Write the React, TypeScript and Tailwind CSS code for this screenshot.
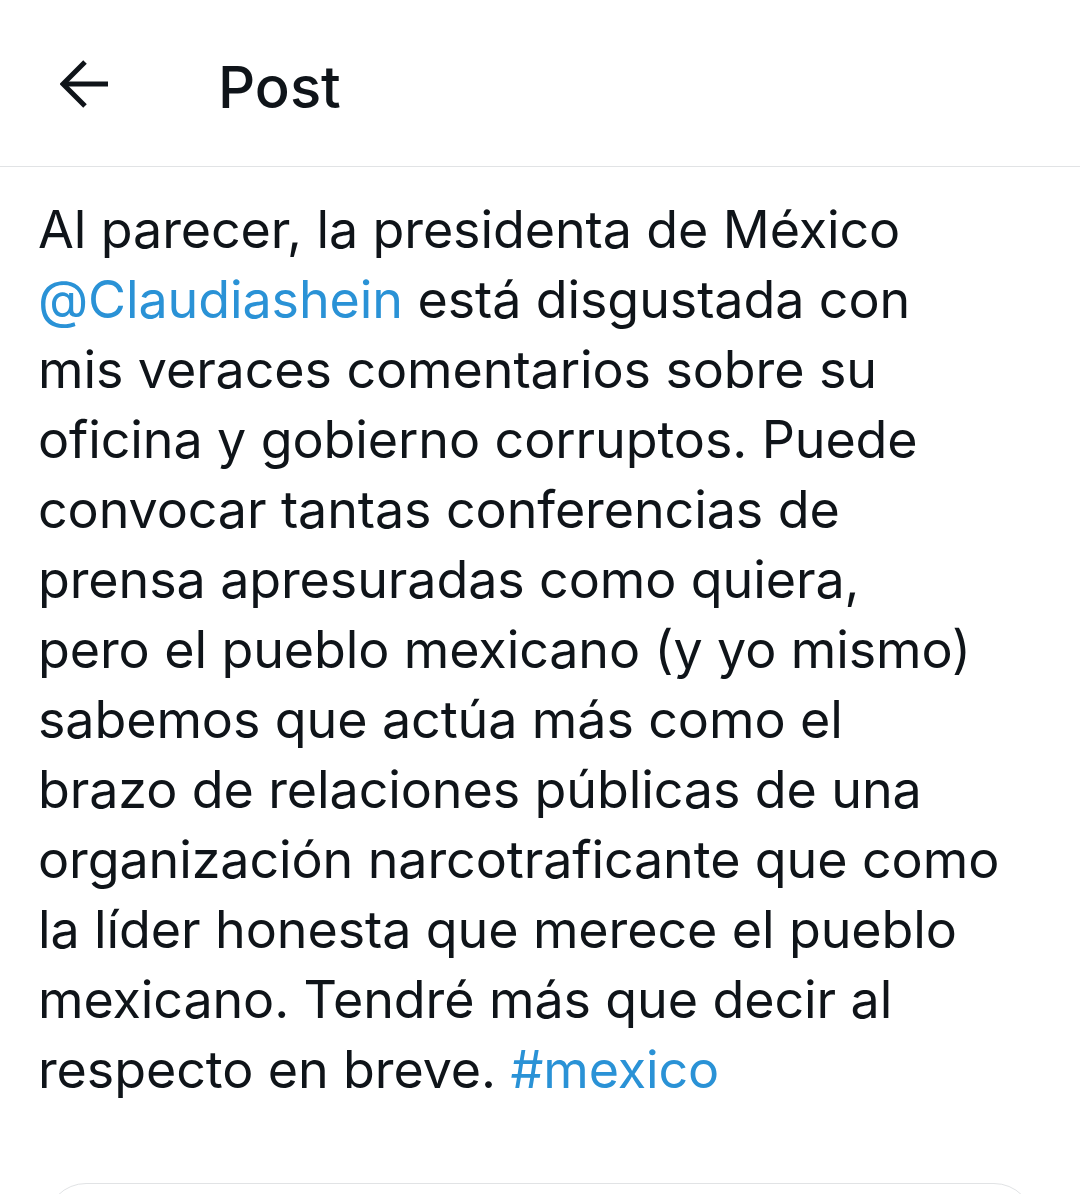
const lines: { text: string; link?: 'start' | 'end' }[] = [
  { text: 'Al parecer, la presidenta de México' },
  { text: 'está disgustada con', link: 'start' },
  { text: 'mis veraces comentarios sobre su' },
  { text: 'oficina y gobierno corruptos. Puede' },
  { text: 'convocar tantas conferencias de' },
  { text: 'prensa apresuradas como quiera,' },
  { text: 'pero el pueblo mexicano (y yo mismo)' },
  { text: 'sabemos que actúa más como el' },
  { text: 'brazo de relaciones públicas de una' },
  { text: 'organización narcotraficante que como' },
  { text: 'la líder honesta que merece el pueblo' },
  { text: 'mexicano. Tendré más que decir al' },
  { text: 'respecto en breve.', link: 'end' },
];

export default function App() {
  return (
    <div className="h-[1194px] w-[1080px] overflow-hidden bg-white font-['Inter',sans-serif] text-[#0f1419]">
      <header className="flex h-[167px] items-center border-b border-[#e1e3e5]">
        <div className="flex w-[218px] items-center pl-[60px] pt-[1px]">
          <svg width="50" height="50" viewBox="0 0 50 50" fill="none" stroke="currentColor" strokeWidth="5">
            <path d="M25 3 L3 25 L25 47" strokeLinejoin="miter" />
            <path d="M3 25 H48" />
          </svg>
        </div>
        <h1 className="pt-[8px] text-[58px] font-medium leading-none">Post</h1>
      </header>

      <div className="px-[38px] pt-[28px] text-[52px] leading-[70px] tracking-[-0.1px]">
        {lines.map((line, i) => (
          <div key={i} className="whitespace-nowrap">
            {line.link === 'start' && <span className="text-[#2a92d6]">@Claudiashein </span>}
            {line.text}
            {line.link === 'end' && <span className="text-[#2a92d6]"> #mexico</span>}
          </div>
        ))}
      </div>

      <div className="mx-[46px] mt-[78px] h-[80px] rounded-t-[40px] border border-[#e1e3e5]" />
    </div>
  );
}
